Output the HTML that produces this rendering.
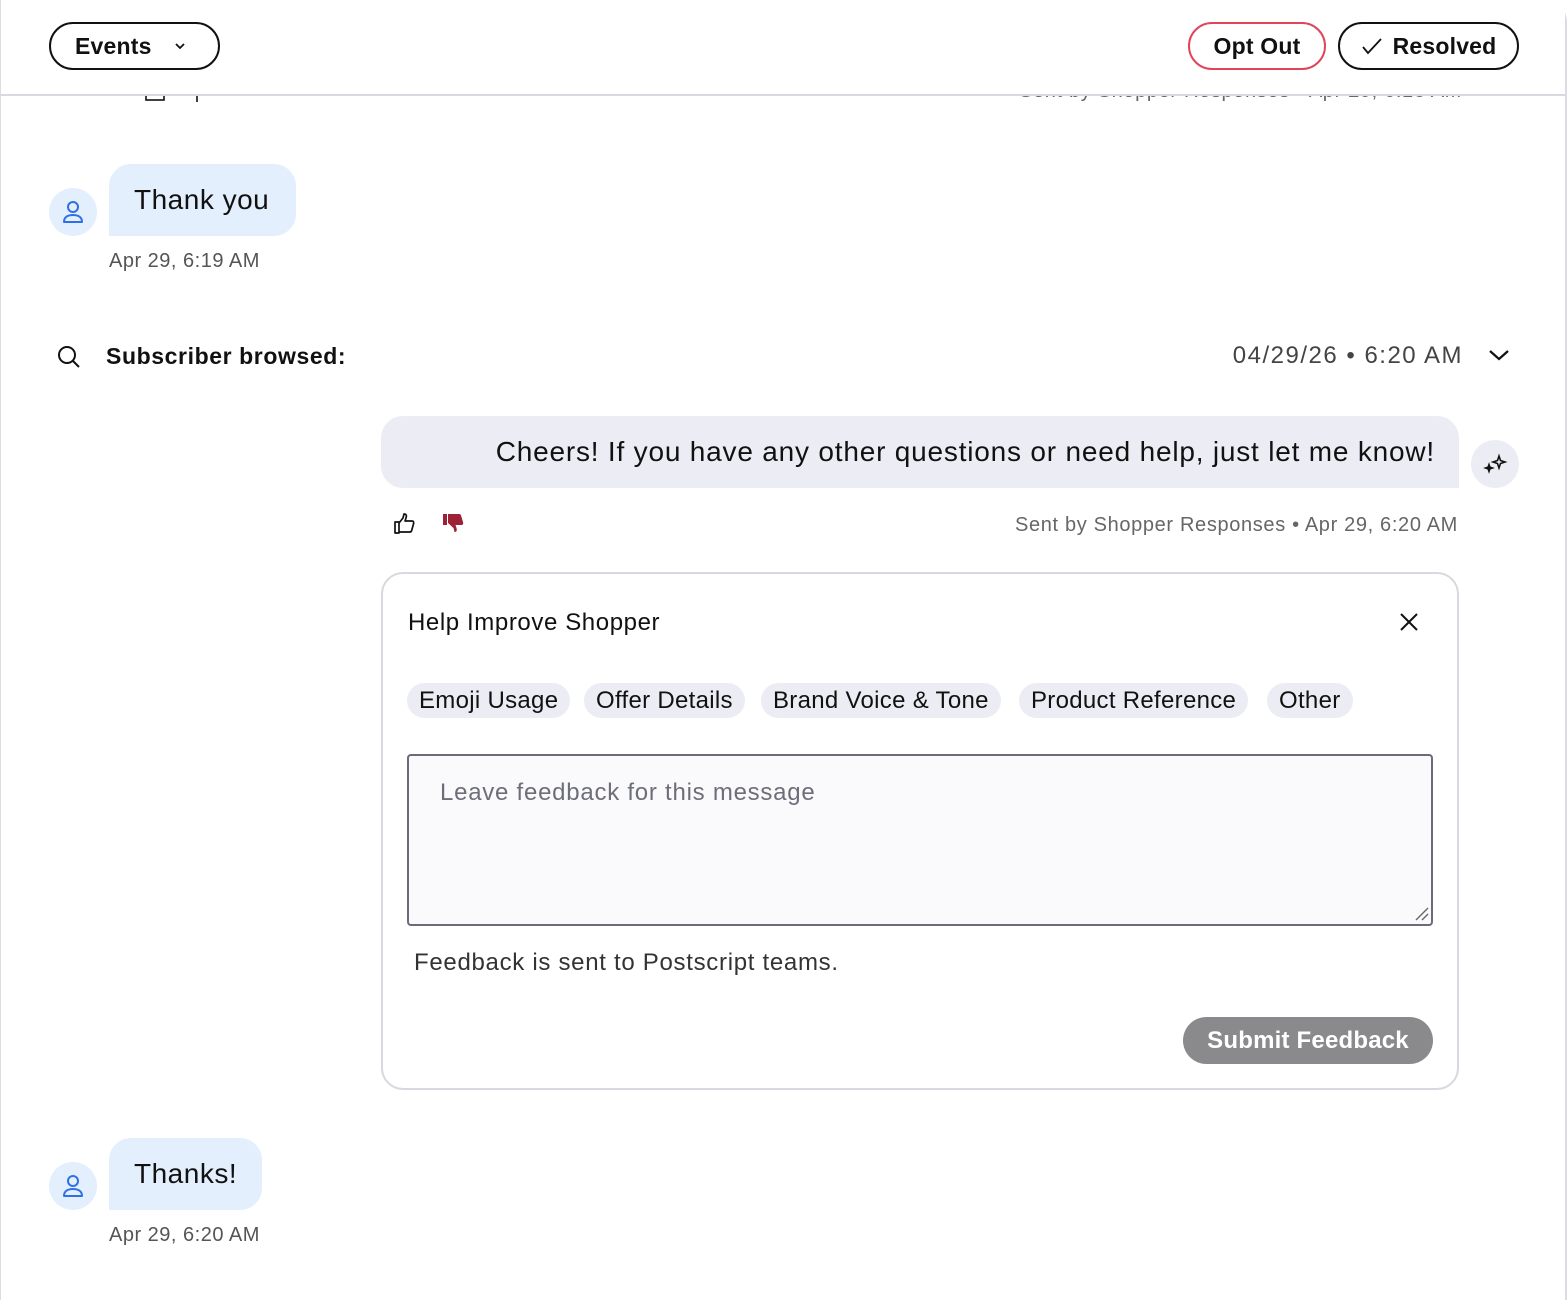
<!DOCTYPE html>
<html><head><meta charset="utf-8"><style>
*{box-sizing:border-box;margin:0;padding:0}
body{width:1568px;height:1288px;background:#fff;font-family:"Liberation Sans",sans-serif;color:#111;position:relative;overflow:hidden;letter-spacing:0.5px}
.a{position:absolute;white-space:nowrap}
.frame{position:absolute;left:0;top:0;width:1567px;height:1300px;border-left:1px solid #dcdce4;border-right:2px solid #dcdce4;border-top-right-radius:22px}
.hdr{position:absolute;left:1px;top:0;width:1564px;height:96px;background:#fff;border-bottom:2px solid #d8d8e0;z-index:5}
.btn{position:absolute;top:22px;height:48px;border:2px solid #111;border-radius:24px;font-weight:bold;font-size:23px;display:flex;align-items:center;justify-content:center;letter-spacing:0.2px}
.av{position:absolute;width:48px;height:48px;border-radius:50%;background:#e3effc;display:flex;align-items:center;justify-content:center}
.ub{position:absolute;left:109px;height:72px;background:#e3effc;border-radius:22px 22px 22px 0;font-size:28px;padding-left:25px;line-height:72px}
.ts{font-size:20px;color:#555}
.chip{position:absolute;top:683px;height:35px;background:#ececf4;border-radius:18px;font-size:24px;line-height:35px;padding:0 12px;letter-spacing:0.3px}
</style></head><body>
<div class="frame"></div>
<div class="hdr">
 <div class="btn" style="left:48px;width:171px;justify-content:flex-start;padding-left:24px">Events<svg style="margin-left:22px" width="12" height="8" viewBox="0 0 12 8"><path d="M2 2l4 4 4-4" fill="none" stroke="#111" stroke-width="1.8"/></svg></div>
 <div class="btn" style="left:1187px;width:138px;border-color:#e0455b">Opt Out</div>
 <div class="btn" style="left:1337px;width:181px"><svg width="22" height="20" viewBox="0 0 22 20" style="margin-right:10px"><path d="M2 11l5 6L20 3" fill="none" stroke="#111" stroke-width="1.8"/></svg>Resolved</div>
</div>
<div class="a ts" style="left:1019px;top:80px;color:#666;letter-spacing:0.65px">Sent by Shopper Responses • Apr 29, 6:18 AM</div>
<svg class="a" style="left:145px;top:84px" width="70" height="20"><rect x="1" y="6" width="18" height="10" fill="none" stroke="#111" stroke-width="1.6"/><path d="M52 4v14" stroke="#111" stroke-width="1.6"/></svg>

<div class="av" style="left:49px;top:188px"><svg width="24" height="26" viewBox="0 0 24 26"><circle cx="12" cy="8" r="5" fill="none" stroke="#2f6fe8" stroke-width="2"/><path d="M3 23c0-5 4-7 9-7s9 2 9 7z" fill="none" stroke="#2f6fe8" stroke-width="2" stroke-linejoin="round"/></svg></div>
<div class="ub" style="top:164px;width:187px">Thank you</div>
<div class="a ts" style="left:109px;top:250px">Apr 29, 6:19 AM</div>

<svg class="a" style="left:56px;top:344px" width="26" height="26" viewBox="0 0 26 26"><circle cx="11" cy="11" r="8" fill="none" stroke="#111" stroke-width="2"/><path d="M17 17l6 6" stroke="#111" stroke-width="2"/></svg>
<div class="a" style="left:106px;top:343px;font-size:23px;font-weight:bold;letter-spacing:0.6px">Subscriber browsed:</div>
<div class="a" style="right:105px;top:342px;font-size:24px;color:#444;letter-spacing:1.5px">04/29/26 • 6:20 AM</div>
<svg class="a" style="left:1488px;top:348px" width="22" height="14" viewBox="0 0 22 14"><path d="M2 3l9 8 9-8" fill="none" stroke="#111" stroke-width="2.2"/></svg>

<div class="a" style="left:381px;top:416px;width:1078px;height:72px;background:#ececf4;border-radius:22px 22px 0 22px;font-size:28px;line-height:72px;text-align:right;padding-right:24px;letter-spacing:0.8px">Cheers! If you have any other questions or need help, just let me know!</div>
<div class="a" style="left:1471px;top:440px;width:48px;height:48px;border-radius:50%;background:#ececf4"><svg width="48" height="48" viewBox="0 0 48 48"><path d="M28 16l1.5 4.5L34 22l-4.5 1.5L28 28l-1.5-4.5L22 22l4.5-1.5z" fill="none" stroke="#111" stroke-width="1.6"/><path d="M18 24l1 3 3 1-3 1-1 3-1-3-3-1 3-1z" fill="#111" stroke="#111" stroke-width="1.2"/></svg></div>

<svg class="a" style="left:393px;top:512px" width="24" height="24" viewBox="0 0 24 24"><path d="M2 10h4v11H2zM6 11l4-5 1-4c2 0 3 1 2 4l-1 3h7c1.5 0 2 1.5 1.5 3l-2 7c-.4 1-1 1-2 1H6" fill="none" stroke="#111" stroke-width="1.7" stroke-linejoin="round"/></svg>
<svg class="a" style="left:441px;top:512px" width="24" height="24" viewBox="0 0 24 24"><path d="M2 2h4v11H2zM7 2h11c1 0 1.6.4 2 1.4l2 6.6c.5 1.5 0 3-1.5 3h-6l1 3c.8 3-.2 4-2 4l-1-4-5.5-5z" fill="#9b2335"/></svg>
<div class="a ts" style="right:110px;top:514px;color:#666;letter-spacing:0.65px">Sent by Shopper Responses • Apr 29, 6:20 AM</div>

<div class="a" style="left:381px;top:572px;width:1078px;height:518px;border:2px solid #d8d8e0;border-radius:22px"></div>
<div class="a" style="left:408px;top:609px;font-size:24px;letter-spacing:0.6px">Help Improve Shopper</div>
<svg class="a" style="left:1398px;top:611px" width="22" height="22" viewBox="0 0 22 22"><path d="M3 3l16 16M19 3L3 19" stroke="#111" stroke-width="2"/></svg>
<div class="chip" style="left:407px">Emoji Usage</div>
<div class="chip" style="left:584px">Offer Details</div>
<div class="chip" style="left:761px">Brand Voice &amp; Tone</div>
<div class="chip" style="left:1019px">Product Reference</div>
<div class="chip" style="left:1267px">Other</div>
<div class="a" style="left:407px;top:754px;width:1026px;height:172px;border:2px solid #6b6b7b;border-radius:4px;background:#fafafc"></div>
<div class="a" style="left:440px;top:779px;font-size:24px;color:#6e6e7a;letter-spacing:0.75px">Leave feedback for this message</div>
<svg class="a" style="left:1414px;top:906px" width="16" height="16"><path d="M2 14L14 2M8 14l6-6" stroke="#666" stroke-width="1.4"/></svg>
<div class="a" style="left:414px;top:949px;font-size:24px;color:#333;letter-spacing:0.7px">Feedback is sent to Postscript teams.</div>
<div class="a" style="left:1183px;top:1017px;width:250px;height:47px;border-radius:24px;background:#8a8a8c;color:#fff;font-weight:bold;font-size:24px;line-height:47px;text-align:center;letter-spacing:0.2px">Submit Feedback</div>

<div class="av" style="left:49px;top:1162px"><svg width="24" height="26" viewBox="0 0 24 26"><circle cx="12" cy="8" r="5" fill="none" stroke="#2f6fe8" stroke-width="2"/><path d="M3 23c0-5 4-7 9-7s9 2 9 7z" fill="none" stroke="#2f6fe8" stroke-width="2" stroke-linejoin="round"/></svg></div>
<div class="ub" style="top:1138px;width:153px">Thanks!</div>
<div class="a ts" style="left:109px;top:1224px">Apr 29, 6:20 AM</div>
</body></html>
